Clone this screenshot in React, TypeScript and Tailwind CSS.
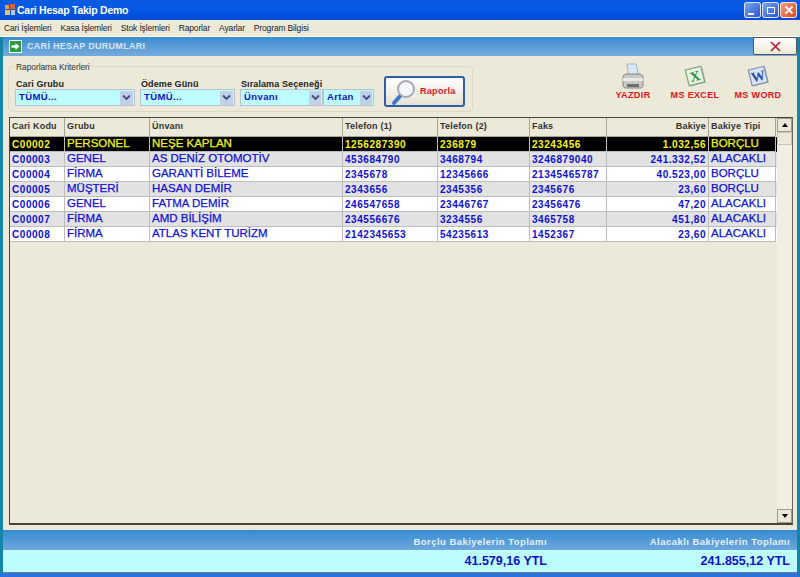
const columns = [
  { label: 'Cari Kodu', width: 55 },
  { label: 'Grubu', width: 85 },
  { label: 'Ünvanı', width: 193 },
  { label: 'Telefon (1)', width: 95 },
  { label: 'Telefon (2)', width: 92 },
  { label: 'Faks', width: 77 },
  { label: 'Bakiye', width: 102, right: true },
  { label: 'Bakiye Tipi', width: 67 },
];

const rows = [
  ['C00002', 'PERSONEL', 'NEŞE KAPLAN', '1256287390', '236879', '23243456', '1.032,56', 'BORÇLU'],
  ['C00003', 'GENEL', 'AS DENİZ OTOMOTİV', '453684790', '3468794', '3246879040', '241.332,52', 'ALACAKLI'],
  ['C00004', 'FİRMA', 'GARANTİ BİLEME', '2345678', '12345666', '21345465787', '40.523,00', 'BORÇLU'],
  ['C00005', 'MÜŞTERİ', 'HASAN DEMİR', '2343656', '2345356', '2345676', '23,60', 'BORÇLU'],
  ['C00006', 'GENEL', 'FATMA DEMİR', '246547658', '23446767', '23456476', '47,20', 'ALACAKLI'],
  ['C00007', 'FİRMA', 'AMD BİLİŞİM', '234556676', '3234556', '3465758', '451,80', 'ALACAKLI'],
  ['C00008', 'FİRMA', 'ATLAS KENT TURİZM', '2142345653', '54235613', '1452367', '23,60', 'ALACAKLI'],
];

function Chevron() {
  return (
    <svg width="9" height="7" viewBox="0 0 9 7" fill="none">
      <path d="M1 1.5 4.5 5 8 1.5" stroke="#3d4f7c" strokeWidth="1.8" />
    </svg>
  );
}

function Combo({ text, width, left, arrow = 13 }: { text: string; width: number; left: number; arrow?: number }) {
  return (
    <div
      className="absolute top-[89px] h-[17px] bg-[#bdfdfd] border border-[#b7c3d3] flex items-center justify-between pl-[3px] pr-px"
      style={{ left, width }}
    >
      <span className="text-[9.5px] font-bold text-[#1010d8] tracking-[0.4px]">{text}</span>
      <span className="h-[14px] bg-[#c4d0ea] flex items-center justify-center" style={{ width: arrow }}>
        <Chevron />
      </span>
    </div>
  );
}

function WinButton({ children, red }: { children: React.ReactNode; red?: boolean }) {
  return (
    <div
      className={`w-[17px] h-[16px] rounded-[3px] border border-white/80 flex items-center justify-center ${
        red ? 'bg-gradient-to-br from-[#f0a080] to-[#d8431c]' : 'bg-gradient-to-br from-[#7ba4f0] to-[#2a55d0]'
      }`}
    >
      {children}
    </div>
  );
}

function Printer() {
  return (
    <svg width="24" height="28" viewBox="0 0 24 28" fill="none">
      <path d="M6 1h9l3 13H8z" fill="#dbe8f5" stroke="#9fb2c8" />
      <path d="M2 14c0-2 2-3 4-3h12c2 0 4 1 4 3v8c0 2-1 3-3 3H5c-2 0-3-1-3-3z" fill="#c9c9c5" stroke="#85857f" />
      <path d="M2 15h20v3H2z" fill="#e9e9e5" />
      <path d="M6 21h12v3H6z" fill="#6f6f6a" />
    </svg>
  );
}

function DocIcon({ fill, color, letter, stroke }: { fill: string; color: string; letter: string; stroke: string }) {
  return (
    <svg width="22" height="22" viewBox="0 0 22 22">
      <g transform="rotate(-14 11 11)">
        <rect x="4" y="4" width="16" height="16" fill="#a8a8a0" />
        <rect x="3" y="3" width="16" height="16" fill={fill} stroke={stroke} strokeWidth="1.2" />
        <text x="11" y="16" textAnchor="middle" fontSize="14" fontWeight="700" fontFamily="Liberation Serif, serif" fill={color}>
          {letter}
        </text>
      </g>
    </svg>
  );
}

function Magnifier() {
  return (
    <svg width="28" height="28" viewBox="0 0 28 28" fill="none">
      <path d="M4 25 11 17" stroke="#3d78c8" strokeWidth="4" strokeLinecap="round" />
      <circle cx="16" cy="11" r="8" fill="#f5f7fa" stroke="#a3a9b3" strokeWidth="2" />
    </svg>
  );
}

export default function App() {
  return (
    <div className="relative w-[800px] h-[577px] overflow-hidden bg-[#ece9d8] [font-family:Liberation_Sans,Arial,sans-serif]">
      {/* title bar */}
      <div className="absolute inset-x-0 top-0 h-[20px] bg-gradient-to-b from-[#0a5ce0] via-[#0358e6] to-[#0349d4] flex items-center pl-[4px] pr-[3px]">
        <svg width="12" height="12" viewBox="0 0 12 12">
          <rect x="1" y="1" width="4" height="4" fill="#e8a040" />
          <rect x="6" y="0" width="5" height="5" fill="#e06030" />
          <rect x="1" y="6" width="5" height="5" fill="#f0c060" />
          <rect x="7" y="6" width="4" height="5" fill="#b8c8e8" />
        </svg>
        <span className="ml-[1px] text-[10.5px] font-bold text-white leading-none tracking-[-0.25px]">Cari Hesap Takip Demo</span>
        <div className="ml-auto flex gap-px">
          <WinButton>
            <span className="block w-[6px] h-[2px] bg-white mt-[7px] mr-[4px]" />
          </WinButton>
          <WinButton>
            <span className="block w-[8px] h-[7px] border border-white" />
          </WinButton>
          <WinButton red>
            <svg width="10" height="10" viewBox="0 0 10 10">
              <path d="M1.5 1.5 8.5 8.5M8.5 1.5 1.5 8.5" stroke="white" strokeWidth="1.8" />
            </svg>
          </WinButton>
        </div>
      </div>

      {/* menu */}
      <div className="absolute inset-x-0 top-[20px] h-[16px] flex items-center pl-[4px] gap-[9px] text-[8.5px] tracking-[-0.15px] text-[#1c1c1c]">
        <span>Cari İşlemleri</span>
        <span>Kasa İşlemleri</span>
        <span>Stok İşlemleri</span>
        <span>Raporlar</span>
        <span>Ayarlar</span>
        <span>Program Bilgisi</span>
      </div>
      <div className="absolute inset-x-0 top-[36px] h-px bg-white" />

      {/* child window edges */}
      <div className="absolute left-0 top-[37px] bottom-0 w-[3px] bg-[#1484a8]" />
      <div className="absolute right-0 top-[37px] bottom-0 w-[3px] bg-[#1484a8]" />

      {/* form header */}
      <div className="absolute left-[3px] right-[3px] top-[37px] h-[19px] bg-gradient-to-b from-[#3a8ed2] to-[#75abdd] flex items-center pl-[6px]">
        <span className="w-[13px] h-[13px] bg-[#2f9a3c] border border-white flex items-center justify-center">
          <svg width="9" height="9" viewBox="0 0 9 9">
            <path d="M0.5 3.2h4V1l4 3.5-4 3.5V5.8h-4z" fill="white" />
          </svg>
        </span>
        <span className="ml-[5px] text-[9px] font-bold text-[#d6e6f5] tracking-[0.3px]">CARİ HESAP DURUMLARI</span>
      </div>
      <div className="absolute left-[753px] top-[37px] w-[44px] h-[18px] bg-gradient-to-b from-white to-[#ece9d8] border border-[#555] rounded-[2px] flex items-center justify-center">
        <svg width="11" height="11" viewBox="0 0 11 11">
          <path d="M1 1 10 10M10 1 1 10" stroke="#c01838" strokeWidth="1.7" />
        </svg>
      </div>

      {/* criteria group */}
      <div className="absolute left-[8px] top-[66px] w-[465px] h-[46px] border border-[#dcd8c6] rounded-[4px]" />
      <span className="absolute left-[15px] top-[61px] px-px bg-[#ece9d8] text-[8.5px] leading-[12px] tracking-[-0.1px] text-[#333]">Raporlama Kriterleri</span>

      <span className="absolute left-[16px] top-[78px] text-[9px] leading-[12px] font-bold text-[#222] tracking-[0.1px]">Cari Grubu</span>
      <span className="absolute left-[141px] top-[78px] text-[9px] leading-[12px] font-bold text-[#222] tracking-[0.1px]">Ödeme Günü</span>
      <span className="absolute left-[241px] top-[78px] text-[9px] leading-[12px] font-bold text-[#222] tracking-[0.1px]">Sıralama Seçeneği</span>

      <Combo text="TÜMÜ..." left={15} width={120} />
      <Combo text="TÜMÜ..." left={140} width={95} />
      <Combo text="Ünvanı" left={240} width={83} arrow={12} />
      <Combo text="Artan" left={323} width={51} arrow={12} />

      <div className="absolute left-[384px] top-[76px] w-[81px] h-[31px] rounded-[3px] border-2 border-[#2c5fa8] bg-gradient-to-b from-white to-[#e6e2d2] flex items-center pl-[4px]">
        <Magnifier />
        <span className="ml-[2px] text-[9px] font-bold text-[#e8101c] tracking-[0.3px]">Raporla</span>
      </div>

      {/* export buttons */}
      <div className="absolute left-[613px] top-[63px] w-[40px] flex flex-col items-center">
        <Printer />
        <span className="-mt-[1px] text-[9px] leading-[11px] font-bold text-[#e8101c] tracking-[0.4px]">YAZDIR</span>
      </div>
      <div className="absolute left-[667px] top-[65px] w-[56px] flex flex-col items-center">
        <DocIcon fill="#e6f2e0" color="#2f8a3a" letter="X" stroke="#7ba878" />
        <span className="mt-[3px] text-[9px] leading-[11px] font-bold text-[#e8101c] tracking-[0.35px] whitespace-nowrap">MS EXCEL</span>
      </div>
      <div className="absolute left-[730px] top-[65px] w-[56px] flex flex-col items-center">
        <DocIcon fill="#dbe4f6" color="#2c4fa8" letter="W" stroke="#7e90b8" />
        <span className="mt-[3px] text-[9px] leading-[11px] font-bold text-[#e8101c] tracking-[0.35px] whitespace-nowrap">MS WORD</span>
      </div>

      {/* grid */}
      <div className="absolute left-[9px] top-[117px] w-[784px] h-[408px] border border-[#4a4238] border-b-2 border-r-[#6c665c]">
        <div className="flex h-[19px]">
          {columns.map((c) => (
            <div
              key={c.label}
              className={`h-full border-r border-b border-[#a8a595] bg-[#ece9d8] flex items-center px-[2px] text-[9px] font-bold text-[#333] tracking-[0.2px] ${
                c.right ? 'justify-end' : ''
              }`}
              style={{ width: c.width }}
            >
              {c.label}
            </div>
          ))}
        </div>
        {rows.map((row, i) => (
          <div
            key={row[0]}
            className={`flex h-[15px] ${i === 0 ? 'bg-black text-[#f4f414]' : i % 2 ? 'bg-[#e2e2e2] text-[#1010d8]' : 'bg-white text-[#1010d8]'}`}
          >
            {row.map((cell, j) => (
              <div
                key={j}
                className={`h-full border-r border-b border-[#bdbdbd] flex items-center px-[2px] whitespace-nowrap overflow-hidden ${
                  j === 6 ? 'justify-end' : ''
                } ${j === 1 || j === 2 || j === 7 ? 'text-[11.5px] [-webkit-text-stroke:0.25px]' : 'font-bold text-[10px] tracking-[0.55px]'}`}
                style={{ width: columns[j].width }}
              >
                {cell}
              </div>
            ))}
          </div>
        ))}

        {/* scrollbar */}
        <div className="absolute right-0 top-0 bottom-0 w-[15px] bg-[#f1efe4] flex flex-col justify-between">
          <div>
            <div className="h-[14px] bg-[#ece9d8] border border-[#9c9a8c] flex items-center justify-center">
              <span className="border-x-[3px] border-x-transparent border-b-[4px] border-b-black" />
            </div>
            <div className="h-[13px] bg-[#ece9d8] border border-[#c8c5b4]" />
          </div>
          <div className="h-[14px] bg-[#ece9d8] border border-[#9c9a8c] flex items-center justify-center">
            <span className="border-x-[3px] border-x-transparent border-t-[4px] border-t-black" />
          </div>
        </div>
      </div>

      {/* totals */}
      <div className="absolute left-[3px] right-[3px] top-[530px] h-[20px] bg-gradient-to-b from-[#338bd2] to-[#6ca7dc] text-[9.5px] font-bold text-[#e6f0f8] tracking-[0.45px]">
        <span className="absolute right-[250px] top-[5px]">Borçlu Bakiyelerin Toplamı</span>
        <span className="absolute right-[7px] top-[5px]">Alacaklı Bakiyelerin Toplamı</span>
      </div>
      <div className="absolute left-[3px] right-[3px] top-[550px] h-[23px] bg-[#bdfdfd] border-b border-[#6c7a90] text-[12.5px] font-bold text-[#1010c8]">
        <span className="absolute right-[250px] top-[4px] leading-[15px]">41.579,16 YTL</span>
        <span className="absolute right-[7px] top-[4px] leading-[15px]">241.855,12 YTL</span>
      </div>
      <div className="absolute inset-x-0 top-[573px] h-[4px] bg-[#2a72dc]" />
    </div>
  );
}
